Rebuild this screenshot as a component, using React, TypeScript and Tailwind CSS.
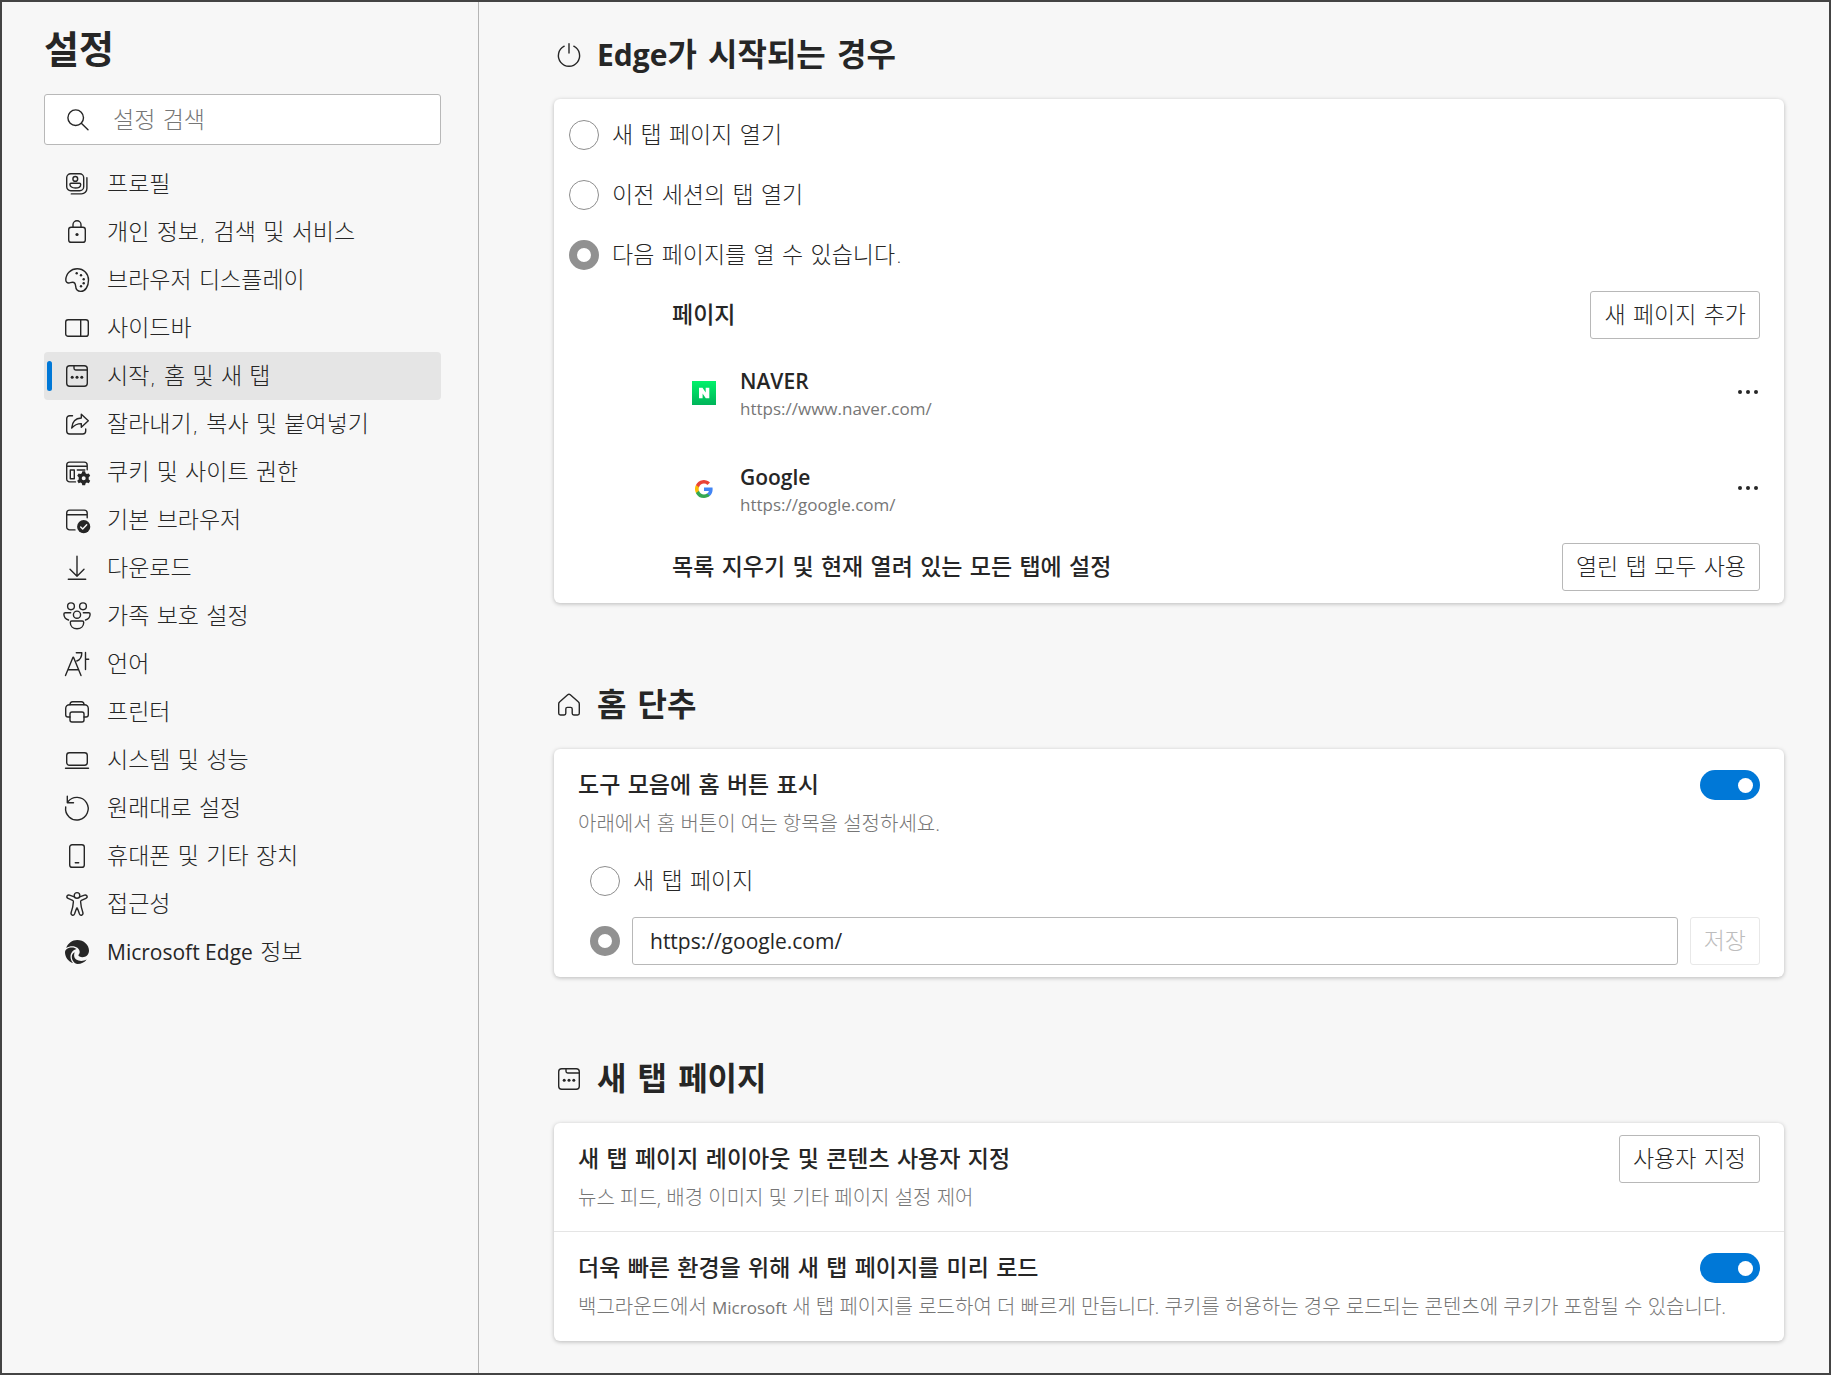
import type { ReactNode } from 'react'

function Icon({ children }: { children: ReactNode }) {
  return (
    <svg
      viewBox="0 0 24 24"
      className="size-6 shrink-0 overflow-visible"
      fill="none"
      stroke="currentColor"
      strokeWidth="1.4"
      strokeLinecap="round"
      strokeLinejoin="round"
      aria-hidden="true"
    >
      {children}
    </svg>
  )
}

const dot = { fill: 'currentColor', stroke: 'none' }

const newTabIcon = (
  <Icon>
    <rect x="1.7" y="1.7" width="20.6" height="20.6" rx="3" />
    <path d="M9 1.7v2.6c0 1 .7 1.7 1.7 1.7h11.6" />
    <circle cx="7.2" cy="13.3" r="1.5" {...dot} />
    <circle cx="12" cy="13.3" r="1.5" {...dot} />
    <circle cx="16.8" cy="13.3" r="1.5" {...dot} />
  </Icon>
)

const powerIcon = (
  <Icon>
    <path d="M12 .7v9.3M7.2 3.2a10.6 10.6 0 1 0 9.6 0" />
  </Icon>
)

const homeIcon = (
  <Icon>
    <path d="M10.7 1.8 2.5 9.1c-.6.5-.8 1-.8 1.8v9.4c0 1 .7 1.7 1.7 1.7h3.8c1 0 1.6-.7 1.6-1.7V16c0-1 .6-1.6 1.6-1.6h3.200c1 0 1.600.6 1.600 1.600v4.300c0 1 .6 1.700 1.600 1.700h3.800c1 0 1.700-.7 1.700-1.700v-9.400c0-.8-.2-1.300-.8-1.800l-8.200-7.300c-.8-.7-1.800-.7-2.600 0z" />
  </Icon>
)

const navItems = [
  {
    label: '프로필',
    icon: (
      <Icon>
        <rect x="1.7" y="1.7" width="17" height="17" rx="4" />
        <circle cx="10.3" cy="6.9" r="2.4" />
        <path d="M6 11.3h8.6c.7 0 1.1.5 1.1 1.1 0 2.2-2.4 3.6-5.4 3.6s-5.4-1.4-5.4-3.6c0-.6.4-1.1 1.1-1.1z" />
        <path d="M21.9 5.7v10.8c0 3-2.4 5.4-5.4 5.4H6.3" />
      </Icon>
    ),
  },
  {
    label: '개인 정보, 검색 및 서비스',
    icon: (
      <Icon>
        <rect x="3.7" y="7.3" width="16.6" height="15" rx="2.4" />
        <path d="M8 7.3V4.7a4 4 0 0 1 8 0v2.6" />
        <circle cx="12" cy="14.5" r="1.6" {...dot} />
      </Icon>
    ),
  },
  {
    label: '브라우저 디스플레이',
    icon: (
      <Icon>
        <path d="M.8 12C.9 5.6 5.9.8 12.2.8c6.5 0 11.3 5 11.3 11.3 0 6-3 11.3-7.8 11.3-3.6 0-4.9-2.6-5.1-5.5-.2-2.4-.8-3.7-3-3.7-1.4 0-2.4.6-3.6.8C2.2 15.3.8 14 .8 12z" />
        <circle cx="11.7" cy="5.3" r="1.2" {...dot} />
        <circle cx="16" cy="7.3" r="1.2" {...dot} />
        <circle cx="18.7" cy="11.2" r="1.2" {...dot} />
        <circle cx="18.7" cy="15.3" r="1.2" {...dot} />
        <circle cx="16" cy="18.2" r="1.2" {...dot} />
      </Icon>
    ),
  },
  {
    label: '사이드바',
    icon: (
      <Icon>
        <rect x=".7" y="3.7" width="22.6" height="16.6" rx="2.4" />
        <path d="M15.7 3.7v16.6" />
      </Icon>
    ),
  },
  { label: '시작, 홈 및 새 탭', icon: newTabIcon, active: true },
  {
    label: '잘라내기, 복사 및 붙여넣기',
    icon: (
      <Icon>
        <path d="M7.5 3.7H4.7a3 3 0 0 0-3 3V19a3 3 0 0 0 3 3h13a3 3 0 0 0 3-3v-2" />
        <path d="m16.3 2.3 7 6.5-7 6.5v-3.7c-4.2 0-6.9 1.2-9.6 4.5.4-5.8 3.6-9.8 9.6-10.1z" />
      </Icon>
    ),
  },
  {
    label: '쿠키 및 사이트 권한',
    icon: (
      <Icon>
        <path d="M10.5 21.9H4.7a3 3 0 0 1-3-3V5.1a3 3 0 0 1 3-3h14.5a3 3 0 0 1 3 3v4.6M1.7 6.3h20.5" />
        <path d="M5.3 10h4v8.7h-4zM12.3 10h7.5" />
        <path
          d="m17.3 11.3h2.8l.5 2 1.2.7 2-.6 1.4 2.4-1.5 1.4v2.2l1.5 1.4-1.4 2.4-2-.6-1.2.7-.5 2h-2.8l-.5-2-1.2-.7-2 .6-1.4-2.4 1.5-1.4v-2.2l-1.5-1.4 1.4-2.4 2 .6 1.2-.7zM18.7 16.3a2 2 0 1 0 0 4 2 2 0 0 0 0-4z"
          fill="currentColor"
          fillRule="evenodd"
          stroke="none"
        />
      </Icon>
    ),
  },
  {
    label: '기본 브라우저',
    icon: (
      <Icon>
        <path d="M10 21.9H4.7a3 3 0 0 1-3-3V5.1a3 3 0 0 1 3-3h14.5a3 3 0 0 1 3 3v4.6M1.7 6.7h20.5" />
        <circle cx="18.7" cy="18.7" r="6.6" {...dot} />
        <path d="m15.7 19 2 2 4-4.3" stroke="#f7f7f7" />
      </Icon>
    ),
  },
  {
    label: '다운로드',
    icon: (
      <Icon>
        <path d="M12 .3v20M5 13.3l7 7 7-7M3.3 23.3h17.4" />
      </Icon>
    ),
  },
  {
    label: '가족 보호 설정',
    icon: (
      <Icon>
        <circle cx="6" cy="2.3" r="3.4" />
        <circle cx="18" cy="2.3" r="3.4" />
        <circle cx="12" cy="10.7" r="3.6" />
        <path d="M5.7 8.7H.3c-.9 0-1.4.6-1.4 1.4 0 3 1.6 5.2 4.6 5.9M18.3 8.7h5.4c.9 0 1.4.6 1.4 1.4 0 3-1.6 5.2-4.6 5.9" />
        <path d="M6.7 17h10.6c.8 0 1.4.6 1.4 1.4 0 3.8-2.7 6.4-6.7 6.4s-6.7-2.6-6.7-6.4c0-.8.6-1.4 1.4-1.4z" />
      </Icon>
    ),
  },
  {
    label: '언어',
    icon: (
      <Icon>
        <path d="M.5 23.5 8 5.3h.5L16 23.5M3.2 17.7h10.2" />
        <path d="M11.3.7h5.5c0 4-1.5 7-5 8.3M20.5.5v17M20.5 7.3h3.2" />
      </Icon>
    ),
  },
  {
    label: '프린터',
    icon: (
      <Icon>
        <path d="M5 4.7c0-2 1-3 2.7-3h8.6c1.7 0 2.7 1 2.7 3" />
        <path d="M5 17H3a2.3 2.3 0 0 1-2.3-2.3V8.5a3.8 3.8 0 0 1 3.8-3.8h15a3.8 3.8 0 0 1 3.8 3.8v6.2A2.3 2.3 0 0 1 21 17h-2" />
        <rect x="5" y="12" width="14" height="10" rx="2" />
      </Icon>
    ),
  },
  {
    label: '시스템 및 성능',
    icon: (
      <Icon>
        <rect x="1.7" y="4.7" width="20.6" height="12.6" rx="2.7" />
        <path d="M.5 20.3h23" />
      </Icon>
    ),
  },
  {
    label: '원래대로 설정',
    icon: (
      <Icon>
        <path d="M2.9 5.8A11.3 11.3 0 1 1 .7 11" />
        <path d="M2.3.3v6.4h6.2" />
      </Icon>
    ),
  },
  {
    label: '휴대폰 및 기타 장치',
    icon: (
      <Icon>
        <rect x="4.7" y=".7" width="14.6" height="22.6" rx="2.4" />
        <path d="M10.3 18.7h3.4" />
      </Icon>
    ),
  },
  {
    label: '접근성',
    icon: (
      <Icon>
        <circle cx="12" cy="3.4" r="2.8" />
        <path d="M9.3 4.8 4.5 3.1c-2.6-.8-3.6 2.4-1.4 3.3l4.5 1.9c.6.3.9.9.8 1.5-.2 3.5-.9 7-2.2 10.5-.9 2.9 2.3 4 3.3 1.6l2-5.4c.2-.6.8-.6 1 0l2 5.4c1 2.4 4.2 1.3 3.3-1.6-1.3-3.5-2-7-2.2-10.5-.1-.6.2-1.2.8-1.5l4.5-1.9c2.2-.9 1.2-4.1-1.4-3.3l-4.8 1.7" />
      </Icon>
    ),
  },
  {
    label: (
      <>
        <Latin>Microsoft Edge</Latin> 정보
      </>
    ),
    icon: (
      <Icon>
        <path
          d="M1.2 8.1C2.8 3.2 7.2 0 12.2 0 18.8 0 24 5 24 10.5c0 4.2-3 6.7-6.6 6.7-2.2 0-4-.8-4-1.9 0-.7 1.300-1.300 1.300-3.200 0-3.600-3.600-5.800-7.300-5.800-2.300 0-4.600.6-6.200 1.800z"
          {...dot}
        />
        <path
          d="M0 12.2C0 9.5 3.3 7.6 7 7.6c1.9 0 3.5.6 4.5 1.5C8 9.9 5.5 13.2 5.5 16.8c0 2.4 1 4.6 2.6 6.3C3.3 21.6 0 17.2 0 12.2z"
          {...dot}
        />
        <path
          d="M9.7 12.3c-.4.9-.6 1.9-.6 2.9 0 3.6 3.3 5.7 7.2 5.7 1.9 0 3.8-.5 5.400-1.400-2.100 2.800-5.500 4.500-9.200 4.500-3.300-.5-5.700-3.500-5.700-7.200 0-1.900 1.200-3.700 2.900-4.500z"
          {...dot}
        />
      </Icon>
    ),
  },
]

// Latin runs sit a step smaller than the hangul around them
function Latin({ children }: { children: ReactNode }) {
  return <span className="font-['Open_Sans',sans-serif] text-[21px] font-normal">{children}</span>
}

function NaverIcon() {
  return (
    <svg viewBox="0 0 24 24" className="size-6 shrink-0" aria-hidden="true">
      <defs>
        <linearGradient id="naver" x1="0" y1="0" x2="0" y2="1">
          <stop offset="0" stopColor="#00f26a" />
          <stop offset="1" stopColor="#00b45a" />
        </linearGradient>
      </defs>
      <rect width="24" height="24" fill="url(#naver)" />
      <path d="M7 6.7h3.5l3.2 4.8V6.7h3.6v10.6h-3.5l-3.2-4.8v4.8H7z" fill="#fff" />
    </svg>
  )
}

function GoogleIcon() {
  return (
    <svg viewBox="0 0 24 24" className="size-6 shrink-0 p-[3px]" aria-hidden="true">
      <path fill="#4285F4" d="M23.5 12.3c0-.8-.1-1.6-.2-2.3H12v4.5h6.5a5.5 5.5 0 0 1-2.4 3.6v3h3.9c2.2-2.1 3.5-5.1 3.5-8.8z" />
      <path fill="#34A853" d="M12 24c3.2 0 5.9-1.1 7.9-2.9l-3.9-3c-1.1.7-2.4 1.2-4 1.2-3.1 0-5.8-2.1-6.7-4.9h-4v3.1A12 12 0 0 0 12 24z" />
      <path fill="#FBBC05" d="M5.3 14.3a7.2 7.2 0 0 1 0-4.6V6.6h-4a12 12 0 0 0 0 10.8z" />
      <path fill="#EA4335" d="M12 4.8c1.8 0 3.3.6 4.6 1.8L20 3.2A12 12 0 0 0 1.3 6.6l4 3.1C6.2 6.9 8.9 4.8 12 4.8z" />
    </svg>
  )
}

const pages = [
  { name: 'NAVER', url: 'https://www.naver.com/', icon: <NaverIcon /> },
  { name: 'Google', url: 'https://google.com/', icon: <GoogleIcon /> },
]

function Button({ children, disabled }: { children: ReactNode; disabled?: boolean }) {
  return (
    <button
      type="button"
      disabled={disabled}
      className="h-12 shrink-0 whitespace-nowrap rounded-[3px] border border-[#b8b8b8] bg-white px-[13px] disabled:border-[#e8e8e8] disabled:text-[#bdbdbd]"
    >
      {children}
    </button>
  )
}

function Toggle({ label }: { label: string }) {
  return (
    <input
      type="checkbox"
      role="switch"
      aria-label={label}
      defaultChecked
      className="flex h-[30px] w-[60px] shrink-0 appearance-none items-center justify-end rounded-full bg-[#0078d7] px-[7px] before:size-[15px] before:rounded-full before:bg-white"
    />
  )
}

const radioClass =
  'size-[30px] shrink-0 appearance-none rounded-full border border-[#8e8e8e] bg-white checked:border-8 checked:border-[#919191]'

function Radio({ name, label, checked }: { name: string; label: string; checked?: boolean }) {
  return (
    <label className="flex h-[60px] items-center gap-[13px]">
      <input type="radio" name={name} defaultChecked={checked} className={radioClass} />
      {label}
    </label>
  )
}

function Section({ icon, title, children }: { icon: ReactNode; title: ReactNode; children: ReactNode }) {
  return (
    <section>
      <div className="mb-5 flex h-12 items-center gap-4 pl-[3px]">
        {icon}
        <h2 className="text-[32px] font-bold leading-[48px]">{title}</h2>
      </div>
      <div className="rounded-md bg-white shadow-[0_1px_4px_rgba(0,0,0,0.25)]">{children}</div>
    </section>
  )
}

function SettingRow({ title, desc, children }: { title: string; desc: ReactNode; children: ReactNode }) {
  return (
    <div className="px-6 pt-3">
      <div className="flex h-12 items-center justify-between">
        <h3 className="font-medium">{title}</h3>
        {children}
      </div>
      <p className="font-['Open_Sans','Noto_Sans_CJK_KR',sans-serif] text-[20px] leading-[30px] text-[#767676]">
        {desc}
      </p>
    </div>
  )
}

export default function App() {
  return (
    <div className="flex min-h-screen border-2 border-[#444] bg-[#f7f7f7] font-['DejaVu_Sans','Noto_Sans_CJK_KR',sans-serif] text-[23px] font-light leading-[30px] text-[#262626]">
      {/* Sidebar */}
      <aside className="w-[477px] shrink-0 border-r border-[#b5b5b5] pl-[42px] pr-[37px] pt-6">
        <h1 className="mb-5 h-12 text-[38px] font-bold leading-[48px]">설정</h1>
        <label className="flex h-[51px] items-center gap-6 rounded-[3px] border border-[#b8b8b8] bg-white px-5">
          <Icon>
            <circle cx="10.7" cy="9.7" r="7.8" />
            <path d="m16.3 15.3 6.7 6.4" />
          </Icon>
          <input
            type="text"
            aria-label="설정 검색"
            placeholder="설정 검색"
            className="min-w-0 flex-1 outline-none placeholder:text-[#767676]"
          />
        </label>
        <nav className="mt-[15px]">
          {navItems.map((item, i) => (
            <a
              key={i}
              href="#"
              className={`flex h-12 items-center rounded pl-[3px] ${item.active ? 'bg-[#e5e5e5]' : ''}`}
            >
              <span className={`mr-[13px] h-[30px] w-[5px] rounded-sm ${item.active ? 'bg-[#0078d7]' : ''}`} />
              {item.icon}
              <span className="ml-[18px] whitespace-nowrap">{item.label}</span>
            </a>
          ))}
        </nav>
      </aside>

      {/* Content */}
      <main className="flex min-w-0 flex-1 flex-col gap-[78px] pb-[31px] pl-[75px] pr-[45px] pt-[29px]">
        <Section
          icon={powerIcon}
          title={
            <>
              <span className="font-['Open_Sans',sans-serif] text-[30px]">Edge</span>가 시작되는 경우
            </>
          }
        >
          <div className="py-[6px] pl-[15px] pr-6">
            <Radio name="startup" label="새 탭 페이지 열기" />
            <Radio name="startup" label="이전 세션의 탭 열기" />
            <Radio name="startup" label="다음 페이지를 열 수 있습니다." checked />
            <div className="pl-[103px]">
              <div className="flex h-[60px] items-center justify-between">
                <h3 className="font-medium">페이지</h3>
                <Button>새 페이지 추가</Button>
              </div>
              {pages.map((page) => (
                <div key={page.name} className="flex h-24 items-center gap-6 pl-5">
                  {page.icon}
                  <div className="flex-1 pt-1 font-['Open_Sans',sans-serif] leading-[27px]">
                    <div className="text-[21px] font-semibold">{page.name}</div>
                    <div className="text-[17px] font-normal text-[#767676]">{page.url}</div>
                  </div>
                  <button type="button" aria-label={`${page.name} 추가 작업`}>
                    <Icon>
                      <circle cx="4" cy="11" r="2" {...dot} />
                      <circle cx="12" cy="11" r="2" {...dot} />
                      <circle cx="20" cy="11" r="2" {...dot} />
                    </Icon>
                  </button>
                </div>
              ))}
              <div className="flex h-[60px] items-center justify-between">
                <h3 className="font-medium">목록 지우기 및 현재 열려 있는 모든 탭에 설정</h3>
                <Button>열린 탭 모두 사용</Button>
              </div>
            </div>
          </div>
        </Section>

        <Section icon={homeIcon} title="홈 단추">
          <SettingRow title="도구 모음에 홈 버튼 표시" desc="아래에서 홈 버튼이 여는 항목을 설정하세요.">
            <Toggle label="도구 모음에 홈 버튼 표시" />
          </SettingRow>
          <div className="pb-[6px] pl-9 pr-6 pt-3">
            <Radio name="home" label="새 탭 페이지" />
            <div className="flex h-[60px] items-center gap-3">
              <input type="radio" name="home" aria-label="URL" defaultChecked className={radioClass} />
              <input
                type="text"
                aria-label="홈 URL"
                defaultValue="https://google.com/"
                className="h-12 min-w-0 flex-1 rounded-[3px] border border-[#b8b8b8] bg-white px-[17px] font-['Open_Sans',sans-serif] text-[21px] font-normal outline-none"
              />
              <Button disabled>저장</Button>
            </div>
          </div>
        </Section>

        <Section icon={newTabIcon} title="새 탭 페이지">
          <div className="border-b border-[#e5e5e5] pb-[18px]">
            <SettingRow title="새 탭 페이지 레이아웃 및 콘텐츠 사용자 지정" desc="뉴스 피드, 배경 이미지 및 기타 페이지 설정 제어">
              <Button>사용자 지정</Button>
            </SettingRow>
          </div>
          <div className="pb-[18px]">
            <SettingRow
              title="더욱 빠른 환경을 위해 새 탭 페이지를 미리 로드"
              desc={
                <>
                  백그라운드에서 <span className="text-[17px] font-normal">Microsoft</span> 새 탭 페이지를 로드하여 더
                  빠르게 만듭니다. 쿠키를 허용하는 경우 로드되는 콘텐츠에 쿠키가 포함될 수 있습니다.
                </>
              }
            >
              <Toggle label="더욱 빠른 환경을 위해 새 탭 페이지를 미리 로드" />
            </SettingRow>
          </div>
        </Section>
      </main>
    </div>
  )
}
